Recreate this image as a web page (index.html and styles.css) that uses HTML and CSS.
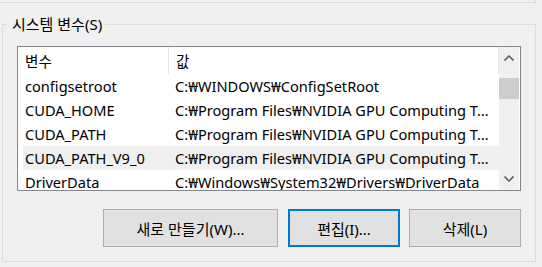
FILE: index.html
```html
<!DOCTYPE html>
<html lang="ko">
<head>
    <meta charset="UTF-8">
    <title>시스템 변수</title>
    <link rel="stylesheet" href="styles.css">
</head>
<body>
    <div class="prev-group"></div>

    <fieldset class="group">
        <legend>시스템 변수(S)</legend>

        <div class="list">
            <div class="list-body">
                <div class="row header">
                    <div class="cell name">변수</div>
                    <div class="cell value">값</div>
                </div>
                <div class="row">
                    <div class="cell name">configsetroot</div>
                    <div class="cell value">C:₩WINDOWS₩ConfigSetRoot</div>
                </div>
                <div class="row">
                    <div class="cell name">CUDA_HOME</div>
                    <div class="cell value">C:₩Program Files₩NVIDIA GPU Computing T…</div>
                </div>
                <div class="row">
                    <div class="cell name">CUDA_PATH</div>
                    <div class="cell value">C:₩Program Files₩NVIDIA GPU Computing T…</div>
                </div>
                <div class="row hover">
                    <div class="cell name">CUDA_PATH_V9_0</div>
                    <div class="cell value">C:₩Program Files₩NVIDIA GPU Computing T…</div>
                </div>
                <div class="row">
                    <div class="cell name">DriverData</div>
                    <div class="cell value">C:₩Windows₩System32₩Drivers₩DriverData</div>
                </div>
            </div>
            <div class="scrollbar">
                <div class="arrow">
                    <svg width="10" height="6" viewBox="0 0 10 6"><polyline points="0.5,5.5 5,1 9.5,5.5" fill="none" stroke="#606060" stroke-width="1.6"/></svg>
                </div>
                <div class="thumb"></div>
                <div class="track"></div>
                <div class="arrow">
                    <svg width="10" height="6" viewBox="0 0 10 6"><polyline points="0.5,0.5 5,5 9.5,0.5" fill="none" stroke="#606060" stroke-width="1.6"/></svg>
                </div>
            </div>
        </div>

        <div class="buttons">
            <button class="btn wide">새로 만들기(W)...</button>
            <button class="btn focused">편집(I)...</button>
            <button class="btn last">삭제(L)</button>
        </div>
    </fieldset>
</body>
</html>
```

FILE: styles.css
```css
body {
    margin: 0;
    background-color: #f0f0f0;
    font-family: 'Noto Sans', 'Noto Sans CJK KR', sans-serif;
    font-size: 15px;
    color: #000;
    width: 542px;
    height: 267px;
    overflow: hidden;
}
.prev-group {
    width: 535px;
    height: 2px;
    border-bottom: 1px solid #dcdcdc;
    border-right: 1px solid #dcdcdc;
}
.group {
    margin: 11px 0 0 2px;
    padding: 0 14px 14px 14px;
    width: 504px;
    min-width: 0;
    border: 1px solid #dcdcdc;
    box-sizing: content-box;
}
.group legend {
    margin-left: -10px;
    padding: 0 3px 0 5px;
    line-height: 20px;
    color: #000;
}

/* --- 목록 --- */
.list {
    margin-top: 12px;
    height: 143px;
    border: 1px solid #828790;
    background-color: #fff;
    display: flex;
    overflow: hidden;
    font-size: 14.6px;
}
.list-body {
    flex: 1;
    min-width: 0;
    padding-left: 5px;
}
.row {
    display: flex;
    height: 24px;
    line-height: 25px;
    padding-left: 2px;
}
.row.header {
    height: 27px;
    line-height: 28px;
}
.row.hover {
    background-color: #efefef;
}
.cell {
    white-space: nowrap;
    overflow: hidden;
    min-width: 0;
}
.cell.name {
    width: 143px;
    flex: none;
}
.cell.value {
    flex: 1;
    padding: 0 4px 0 7px;
    text-overflow: ellipsis;
}
.header .cell.name {
    border-right: 1px solid #e5e5e5;
}
.header .cell.value {
    border-right: 1px solid #e5e5e5;
}
.scrollbar {
    width: 20px;
    flex: none;
    margin-right: 1px;
    background-color: #f0f0f0;
    display: flex;
    flex-direction: column;
}
.arrow {
    height: 22px;
    display: flex;
    justify-content: center;
    align-items: center;
}
.thumb {
    height: 21px;
    margin-top: 9px;
    background-color: #cdcdcd;
}
.track {
    flex: 1;
}

/* --- 버튼 --- */
.buttons {
    display: flex;
    justify-content: flex-end;
    margin-top: 18px;
}
.btn {
    font-family: inherit;
    font-size: 15px;
    color: #000;
    background-color: #e1e1e1;
    border: 1px solid #adadad;
    height: 38px;
    width: 112px;
    padding: 0;
    margin-left: 10px;
}
.btn.wide {
    width: 175px;
}
.btn.last {
    margin-left: 9px;
}
.btn.focused {
    border: 2px solid #0078d7;
}
```
